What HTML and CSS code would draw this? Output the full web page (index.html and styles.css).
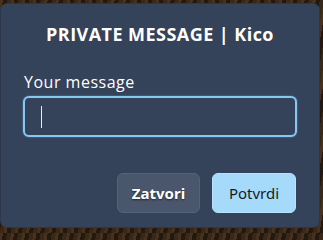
FILE: index.html
```html
<!DOCTYPE html>
<html>
<head>
<meta charset="utf-8">
<link rel="stylesheet" href="styles.css">
</head>
<body>
<div class="modal">
  <h1 class="title">PRIVATE MESSAGE | Kico</h1>
  <label class="label" for="msg">Your message</label>
  <div class="input"><span class="caret"></span></div>
  <div class="actions">
    <button class="btn btn-close">Zatvori</button>
    <button class="btn btn-ok">Potvrdi</button>
  </div>
</div>
</body>
</html>
```
FILE: styles.css
```css
html, body {
  margin: 0;
  padding: 0;
}
body {
  width: 323px;
  height: 233px;
  overflow: hidden;
  background:
    repeating-linear-gradient(100deg, rgba(120,85,45,0.35) 0 3px, rgba(20,14,8,0.4) 3px 7px, rgba(90,60,30,0.3) 7px 11px),
    #2b1f14;
}
.modal {
  box-sizing: border-box;
  margin-top: 3px;
  width: 320px;
  height: 225px;
  background: #34425a;
  border: 1px solid #2c374b;
  border-radius: 7px;
  padding: 18px 22px 14px 22px;
  display: flex;
  flex-direction: column;
  font-family: "Open Sans", "Liberation Sans", sans-serif;
  color: #fff;
}
.title {
  margin: 0;
  font-size: 18px;
  line-height: 24px;
  font-weight: 700;
  text-align: center;
  letter-spacing: 0.45px;
}
.label {
  margin-top: 26px;
  font-size: 16px;
  line-height: 20px;
  font-weight: 500;
  letter-spacing: 0.5px;
  padding-left: 1px;
}
.input {
  box-sizing: border-box;
  margin-top: 4px;
  height: 41px;
  border: 2px solid #86c8f2;
  border-radius: 6px;
  background: #34425a;
  box-shadow: 0 0 2px rgba(134,200,242,0.6);
  display: flex;
  align-items: center;
  padding-left: 16px;
}
.caret {
  width: 1px;
  height: 22px;
  background: #e8eef5;
}
.actions {
  margin-top: auto;
  display: flex;
  justify-content: flex-end;
  gap: 12px;
  padding-right: 1px;
}
.btn {
  box-sizing: border-box;
  height: 40px;
  border-radius: 6px;
  font-family: "Noto Sans", "Open Sans", sans-serif;
  font-size: 15px;
  padding: 0;
}
.btn-close {
  width: 83px;
  background: #4a566b;
  border: 1px solid #56627a;
  color: #fff;
  font-weight: 700;
  text-shadow: 0 1px 2px rgba(0,0,0,0.6);
}
.btn-ok {
  width: 84px;
  background: #a6dafa;
  border: 1px solid #b8e3fb;
  color: #141a26;
  font-weight: 400;
}
```
